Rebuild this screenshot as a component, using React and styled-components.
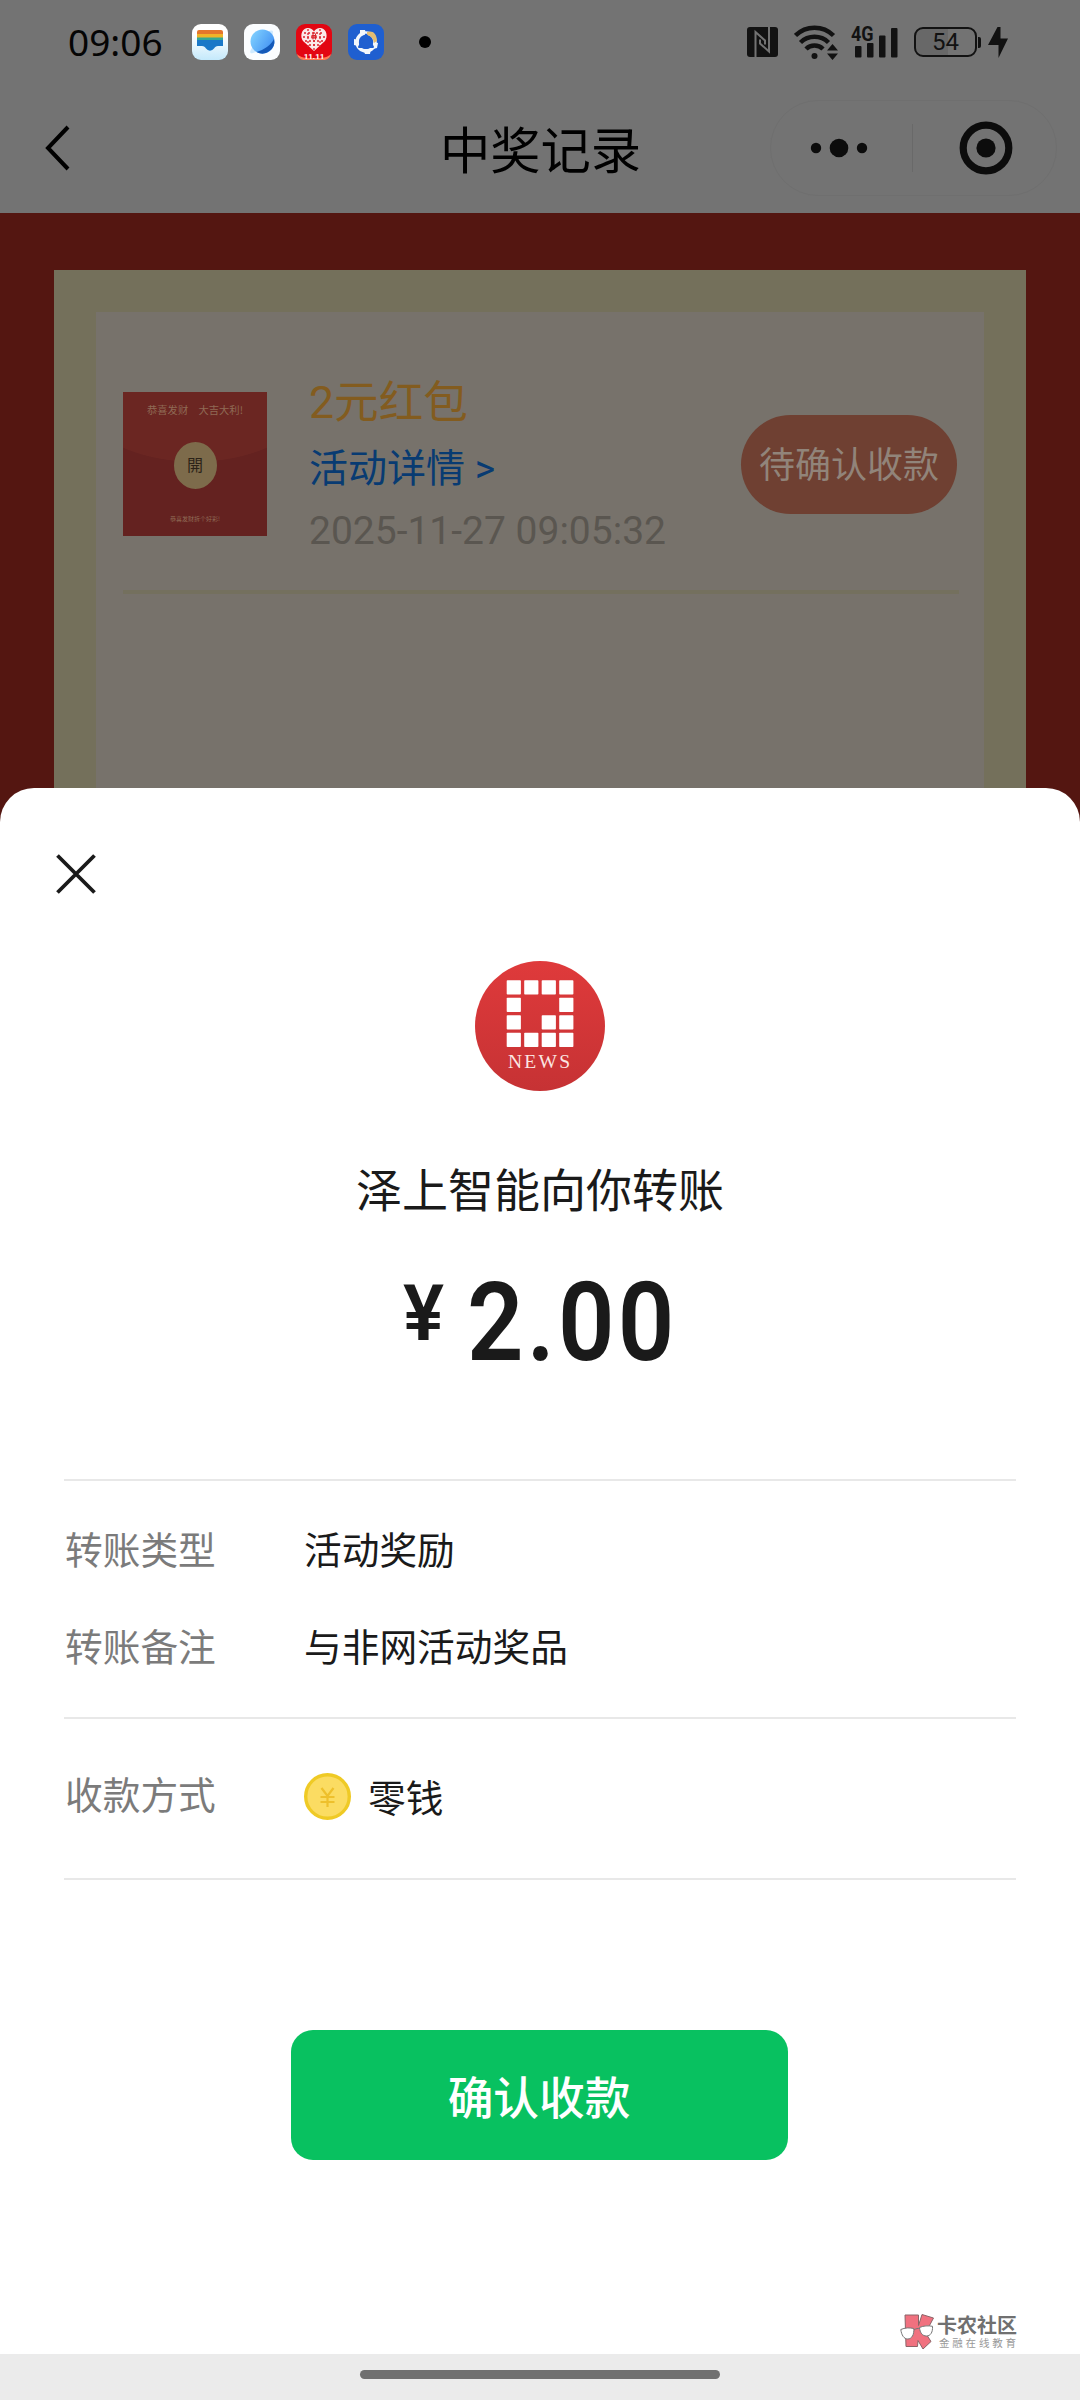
import React from "react"
import styled, { createGlobalStyle } from "styled-components"

const GlobalStyle = createGlobalStyle`
  * {
    box-sizing: border-box;
  }
  body {
    margin: 0;
    font-family: "Noto Sans CJK SC", sans-serif;
    -webkit-font-smoothing: antialiased;
  }
`

const Screen = styled.div`
  width: 1080px;
  height: 2400px;
  display: flex;
  flex-direction: column;
  overflow: hidden;
  background: #541611;
`

/* ---------- header ---------- */

const StatusBar = styled.div`
  height: 84px;
  flex: none;
  display: flex;
  align-items: center;
  padding: 0 72px 0 68px;
  background: #737373;
  color: #121212;
  svg {
    display: block;
    flex: none;
  }
`

const Clock = styled.div`
  width: 124px;
  font-family: "Noto Sans", sans-serif;
  font-size: 37px;
  line-height: 40px;
  color: #050505;
`

const AppIcons = styled.div`
  display: flex;
  gap: 16px;
`

const Dot = styled.span`
  width: 12px;
  height: 12px;
  margin-left: 35px;
  border-radius: 50%;
  background: #000;
`

const StatusIcons = styled.div`
  display: flex;
  align-items: center;
  margin-left: auto;
`

const Signal = styled.div`
  position: relative;
  width: 47px;
  height: 32px;
  margin-left: 12px;
`

const NetworkType = styled.span`
  position: absolute;
  left: 0;
  top: -4px;
  font-family: Roboto, sans-serif;
  font-size: 20px;
  font-weight: 700;
  line-height: 24px;
  transform: scaleX(0.9);
  transform-origin: left;
`

const Battery = styled.div`
  position: relative;
  width: 63px;
  height: 30px;
  margin-left: 16px;
  border: 2px solid #121212;
  border-radius: 9px;
  background: linear-gradient(90deg, #686868 54%, #737373 54%);
  font-family: Roboto, sans-serif;
  font-size: 24px;
  line-height: 27px;
  text-align: center;
  &::after {
    content: "";
    position: absolute;
    right: -6px;
    top: 8px;
    width: 3px;
    height: 11px;
    border-radius: 0 2px 2px 0;
    background: #121212;
  }
`

const NavBar = styled.div`
  height: 129px;
  flex: none;
  display: grid;
  grid-template-columns: 310px 1fr 310px;
  align-items: center;
  padding-bottom: 1px;
  background: #737373;
`

const BackIcon = styled.svg`
  margin-left: 42px;
`

const NavTitle = styled.h1`
  margin: 0;
  padding: 0 0 3px 1px;
  font-size: 50.3px;
  font-weight: 400;
  line-height: 60px;
  text-align: center;
  color: #000;
`

const Capsule = styled.div`
  width: 287px;
  height: 96px;
  display: flex;
  align-items: center;
  border: 1px solid #6f6f6f;
  border-radius: 48px;
`

const CapsuleHalf = styled.div`
  width: 141px;
  display: flex;
  justify-content: center;
  padding-right: 5px;
  & + & {
    width: 144px;
    height: 48px;
    padding: 0 0 0 2px;
    align-items: center;
    border-left: 1px solid #696969;
  }
`

/* ---------- record card ---------- */

const RecordCard = styled.div`
  height: 518px;
  flex: none;
  margin: 57px 54px 0;
  padding: 42px 42px 0;
  background: #74705b;
`

const RecordList = styled.div`
  height: 476px;
  padding: 0 25px 0 27px;
  background: #77726b;
`

const Record = styled.div`
  height: 282px;
  display: flex;
  align-items: center;
  padding-top: 26px;
  border-bottom: 4px solid #74705e;
`

const Packet = styled.div`
  width: 144px;
  height: 144px;
  display: flex;
  flex-direction: column;
  align-items: center;
  background: radial-gradient(ellipse 120px 70px at 50% 0, #6b2622 99%, #642220 100%);
  color: #8f6a55;
`

const PacketText = styled.div`
  height: ${(props) => (props.$small ? "14px" : "38px")};
  padding-top: ${(props) => (props.$small ? "0" : "8px")};
  font-size: ${(props) => (props.$small ? "6px" : "10.3px")};
  line-height: ${(props) => (props.$small ? "14px" : "20px")};
  white-space: pre;
`

const PacketSeal = styled.div`
  width: 43px;
  height: 47px;
  margin: 12px 0 23px;
  border-radius: 50%;
  background: #7d6b4b;
  color: #2c2318;
  font-size: 16px;
  line-height: 45px;
  text-align: center;
`

const RecordInfo = styled.div`
  flex: 1;
  margin-left: 42px;
  padding-top: 3px;
  white-space: nowrap;
`

const RecordTitle = styled.div`
  font-family: Roboto, "Noto Sans CJK SC", sans-serif;
  font-size: 44.6px;
  line-height: 65px;
  color: #835c1f;
`

const RecordLink = styled.div`
  font-family: Roboto, "Noto Sans CJK SC", sans-serif;
  font-size: 39px;
  line-height: 66px;
  color: #083b72;
`

const RecordTime = styled.div`
  font-family: Roboto, sans-serif;
  font-size: 39px;
  line-height: 58px;
  color: #5a5650;
`

const PendingButton = styled.button`
  width: 216px;
  height: 99px;
  margin-right: 2px;
  padding: 0 0 5px;
  border: none;
  border-radius: 50px;
  background: #6f4032;
  color: #91847a;
  font-family: "Noto Sans CJK SC", sans-serif;
  font-size: 36px;
  white-space: nowrap;
`

/* ---------- transfer sheet ---------- */

const Sheet = styled.div`
  position: relative;
  height: 1566px;
  flex: none;
  padding: 0 64px;
  display: flex;
  flex-direction: column;
  align-items: center;
  border-radius: 34px 34px 0 0;
  background: #fff;
  color: #1a1a1a;
`

const CloseIcon = styled.svg`
  align-self: flex-start;
  margin: 66px 0 67px -8px;
  flex: none;
`

const Payer = styled.div`
  margin-top: 66px;
  font-size: 46px;
  line-height: 60px;
`

const Amount = styled.div`
  display: flex;
  align-items: flex-start;
  height: 110px;
  margin-top: 51px;
  font-family: Roboto, sans-serif;
  font-weight: 600;
`

const Currency = styled.span`
  width: 64px;
  font-size: 77px;
  line-height: 92px;
`

const Figure = styled.span`
  width: 210px;
  font-size: 110px;
  line-height: 110px;
  letter-spacing: 3.5px;
  transform: scaleX(0.9);
  transform-origin: left;
`

const Details = styled.div`
  width: 952px;
  margin-top: 101px;
  border-top: 2px solid #e8e8e8;
`

const DetailGroup = styled.div`
  height: ${(props) => props.$height}px;
  display: flex;
  flex-direction: column;
  justify-content: center;
  padding-bottom: 5px;
  border-bottom: 2px solid #e8e8e8;
`

const DetailRow = styled.div`
  height: 97px;
  display: flex;
  align-items: center;
  font-size: 37.7px;
  line-height: 56px;
`

const DetailLabel = styled.div`
  width: 240px;
  padding-left: 1px;
  padding-bottom: ${(props) => (props.$raised ? "6px" : "0")};
  color: #7b7b7b;
`

const DetailValue = styled.div`
  display: flex;
  align-items: center;
  gap: 17px;
`

const ConfirmButton = styled.button`
  width: 497px;
  height: 130px;
  margin: 150px 2px 0 0;
  padding: 0;
  border: none;
  border-radius: 22px;
  background: #08c160;
  color: #fff;
  font-family: "Noto Sans CJK SC", sans-serif;
  font-size: 45.7px;
  font-weight: 500;
`

const Watermark = styled.div`
  position: absolute;
  left: 900px;
  bottom: 4px;
  display: flex;
  align-items: center;
  gap: 3px;
`

const WatermarkName = styled.div`
  font-size: 20px;
  font-weight: 700;
  line-height: 22px;
  color: #707070;
`

const WatermarkSlogan = styled.div`
  padding-left: 2px;
  font-size: 10.5px;
  line-height: 14px;
  letter-spacing: 2.8px;
  color: #999;
`

const HomeBar = styled.div`
  flex: 1;
  padding-top: 16px;
  background: #ebebeb;
`

const HomeHandle = styled.div`
  width: 360px;
  height: 9px;
  margin: 0 auto;
  border-radius: 5px;
  background: #707070;
`

const WalletIcon = () => (
  <svg width="36" height="36" viewBox="0 0 36 36">
    <defs>
      <linearGradient id="wallet" x1="0" y1="0" x2="0" y2="1">
        <stop offset="0.3" stopColor="#fff" />
        <stop offset="1" stopColor="#c4e9fb" />
      </linearGradient>
    </defs>
    <rect width="36" height="36" rx="9" fill="url(#wallet)" />
    <path d="M5 10V8a2 2 0 0 1 2-2h22a2 2 0 0 1 2 2v2z" fill="#e5762c" />
    <path d="M5 10h26v4H5z" fill="#f0b429" />
    <path d="M5 13.500h26v3H5z" fill="#35a894" />
    <path d="M5 16h26v6h-5c-2 0-3 1-4 2.500a4.800 4.800 0 0 1-8 0c-1-1.500-2-2.500-4-2.500H5z" fill="#1978c8" />
  </svg>
)

const BrowserIcon = () => (
  <svg width="36" height="36" viewBox="0 0 36 36">
    <defs>
      <linearGradient id="globe" x1="0" y1="0.2" x2="1" y2="0.8">
        <stop offset="0" stopColor="#7fd0ff" />
        <stop offset="1" stopColor="#3f8df2" />
      </linearGradient>
    </defs>
    <rect width="36" height="36" rx="9" fill="#fbfdff" />
    <path d="M8 24c-3 4-2 6 1 5 8-2 18-12 20-20 .5-3-2-3-5-1z" fill="#cfeaff" />
    <circle cx="18.500" cy="17.500" r="12" fill="url(#globe)" />
    <path d="M30 15A12 12 0 0 1 12.500 28C20 26 27 21 30 15z" fill="#1459b8" />
  </svg>
)

const HeartIcon = () => (
  <svg width="36" height="36" viewBox="0 0 36 36">
    <rect width="36" height="36" rx="9" fill="#e30612" />
    <path d="M1 30c4 4 8 4 17 4s13 0 17-4c-1 4-4 6-8 6H9c-4 0-7-2-8-6z" fill="#ff7a55" />
    <path d="M18 27L7 17c-3-4-2-12 4-13 3-.5 5.500 1 7 3.500C19.500 5 22 3.500 25 4c6 1 7 9 4 13z" fill="#fbe9e9" />
    <g fill="none" stroke="#d9252d" strokeWidth="1.300" strokeDasharray="2 2">
      <path d="M8 9h20M7 13h22M9 17h18M13 21h10M12 5v18M18 8v18M24 5v18" />
    </g>
    <path d="M15.500 11.500h5M15.500 14h5M17 9.500v6M19.500 9.500v6" stroke="#d9252d" strokeWidth="1" />
    <text x="18" y="34.500" textAnchor="middle" fontFamily="Roboto" fontSize="8" fontWeight="700" fill="#fff">11.11</text>
  </svg>
)

const GearIcon = () => (
  <svg width="36" height="36" viewBox="0 0 36 36">
    <rect width="36" height="36" rx="9" fill="#1f5fd0" />
    <circle cx="18" cy="18" r="9" fill="none" stroke="#f2f7fc" strokeWidth="3.500" />
    <g fill="#f2f7fc">
      <path d="M12 6h5l1 4-6 2z" />
      <path d="M6 15l5 1-1 6-4-1z" />
      <path d="M15 25h8l-1 5h-5z" />
      <path d="M26 18l4 1-1 5-4 1z" />
    </g>
    <path d="M19 8c5-2 10 1 10 9l-3 2c-1-5-3-7-7-8z" fill="#e4bd72" />
    <path d="M18 10.500l7 12.500H11z" fill="#1f5fd0" strokeLinejoin="round" stroke="#1f5fd0" strokeWidth="2" />
  </svg>
)

const NfcIcon = () => (
  <svg width="31" height="30" viewBox="0 0 31 30">
    <path d="M3 0h25a3 3 0 0 1 3 3v24a3 3 0 0 1-3 3H3a3 3 0 0 1-3-3V3a3 3 0 0 1 3-3z" fill="#121212" />
    <path d="M8.500 30V5l9.500 8.500v4M22 0v24.500l-9-8v-4" fill="none" stroke="#737373" strokeWidth="2" />
  </svg>
)

const WifiIcon = () => (
  <svg width="45" height="35" viewBox="0 0 45 35" style={{ marginLeft: 16 }}>
    <g fill="none" stroke="#121212" strokeWidth="4.500">
      <path d="M1.500 10.500a27 27 0 0 1 38 0" />
      <path d="M6.500 17.500a20 20 0 0 1 28 0" />
      <path d="M12 24a12 12 0 0 1 17 0" />
    </g>
    <circle cx="20.500" cy="31" r="3" fill="#121212" />
    <path d="M33 25.500l5.500-6.500 5.500 6.500zM33 28.500h11L38.500 35z" fill="#121212" />
  </svg>
)

const SignalIcon = () => (
  <Signal>
    <NetworkType>4G</NetworkType>
    <svg width="47" height="32" viewBox="0 0 47 32" fill="#121212">
      <rect x="4" y="20" width="6.500" height="11.500" rx="1" />
      <rect x="16" y="17" width="6.500" height="14.500" rx="1" />
      <rect x="28" y="9.500" width="6.500" height="22" rx="1" />
      <rect x="40" y="2" width="6.500" height="29.500" rx="1" />
    </svg>
  </Signal>
)

const BoltIcon = () => (
  <svg width="20" height="31" viewBox="0 0 20 31" style={{ marginLeft: 11 }}>
    <path d="M9.500 0L0 18h10.500v13L20 11.500h-7.500V0z" fill="#121212" />
  </svg>
)

const BLOCKS = [
  [0, 0], [1, 0], [2, 0], [3, 0],
  [0, 1], [3, 1],
  [0, 2], [2, 2], [3, 2],
  [0, 3], [1, 3], [2, 3], [3, 3],
]

const NewsLogo = () => (
  <svg width="130" height="130" viewBox="0 0 130 130" style={{ flex: "none" }}>
    <defs>
      <linearGradient id="news" x1="0" y1="0" x2="0" y2="1">
        <stop offset="0" stopColor="#df3a3b" />
        <stop offset="1" stopColor="#c63234" />
      </linearGradient>
    </defs>
    <circle cx="65" cy="65" r="65" fill="url(#news)" />
    {BLOCKS.map(([col, row]) => (
      <rect key={`${col}-${row}`} x={31.7 + col * 17.5} y={19.3 + row * 17.5} width="14.200" height="14.200" rx="0.800" fill="#fff" />
    ))}
    <text x="33" y="107" fontFamily="Liberation Serif" fontSize="19.500" textLength="62" fill="#fbe6e2">NEWS</text>
  </svg>
)

const CoinIcon = () => (
  <svg width="47" height="47" viewBox="0 0 47 47">
    <circle cx="23.500" cy="23.500" r="21.800" fill="#fbdc62" stroke="#efca25" strokeWidth="3.400" />
    <path d="M17.500 15l6 8 6-8M23.500 23v11M16.500 24h14M16.500 29h14" fill="none" stroke="#eec02c" strokeWidth="2.200" />
  </svg>
)

const GlassesLogo = () => (
  <svg width="34" height="36" viewBox="0 0 34 36">
    <path d="M5 1h13.500v10.500L22 .5l11.500 3.500-8 15 5.500 8.500-8 7.500-5-8.500-.5 6H6z" fill="#f0717f" stroke="#8b6468" strokeWidth="1" />
    <g fill="#fff" stroke="#777" strokeWidth="1">
      <path d="M.8 15.500c4-1.800 9-2 13-1 .5 6-2 10.500-6 10.500S1.500 21 .8 15.500z" />
      <path d="M19.500 13.500c4-1.800 9-2 13-1.200.4 6-2 9.700-6 9.700s-6.500-3-7-8.500z" />
      <path d="M14 16c2-1.500 4-1.800 5.500-1.500" fill="none" />
    </g>
  </svg>
)

const DETAILS = [
  { label: "转账类型", value: "活动奖励" },
  { label: "转账备注", value: "与非网活动奖品" },
]

export default function App() {
  return (
    <Screen>
      <GlobalStyle />
      <StatusBar>
        <Clock>09:06</Clock>
        <AppIcons>
          <WalletIcon />
          <BrowserIcon />
          <HeartIcon />
          <GearIcon />
        </AppIcons>
        <Dot />
        <StatusIcons>
          <NfcIcon />
          <WifiIcon />
          <SignalIcon />
          <Battery>54</Battery>
          <BoltIcon />
        </StatusIcons>
      </StatusBar>

      <NavBar>
        <BackIcon width="30" height="50" viewBox="0 0 30 50">
          <path d="M26 4L6 25l20 21" fill="none" stroke="#000" strokeWidth="4" />
        </BackIcon>
        <NavTitle>中奖记录</NavTitle>
        <Capsule>
          <CapsuleHalf>
            <svg width="58" height="20" viewBox="0 0 58 20">
              <circle cx="6" cy="10" r="5.200" fill="#0c0c0c" />
              <circle cx="29" cy="10" r="9.300" fill="#0c0c0c" />
              <circle cx="52" cy="10" r="5.200" fill="#0c0c0c" />
            </svg>
          </CapsuleHalf>
          <CapsuleHalf>
            <svg width="54" height="54" viewBox="0 0 54 54">
              <circle cx="27" cy="27" r="22.800" fill="none" stroke="#0c0c0c" strokeWidth="7.200" />
              <circle cx="27" cy="27" r="9.600" fill="#0c0c0c" />
            </svg>
          </CapsuleHalf>
        </Capsule>
      </NavBar>

      <RecordCard>
        <RecordList>
          <Record>
            <Packet>
              <PacketText>恭喜发财　大吉大利!</PacketText>
              <PacketSeal>開</PacketSeal>
              <PacketText $small>恭喜发财拆个好彩!</PacketText>
            </Packet>
            <RecordInfo>
              <RecordTitle>2元红包</RecordTitle>
              <RecordLink>活动详情 &gt;</RecordLink>
              <RecordTime>2025-11-27 09:05:32</RecordTime>
            </RecordInfo>
            <PendingButton>待确认收款</PendingButton>
          </Record>
        </RecordList>
      </RecordCard>

      <Sheet>
        <CloseIcon width="40" height="40" viewBox="0 0 40 40">
          <path d="M1.500 1.500l37 37M38.500 1.500l-37 37" stroke="#1a1a1a" strokeWidth="3.800" />
        </CloseIcon>
        <NewsLogo />
        <Payer>泽上智能向你转账</Payer>
        <Amount>
          <Currency>¥</Currency>
          <Figure>2.00</Figure>
        </Amount>
        <Details>
          <DetailGroup $height={238}>
            {DETAILS.map((item) => (
              <DetailRow key={item.label}>
                <DetailLabel>{item.label}</DetailLabel>
                <DetailValue>{item.value}</DetailValue>
              </DetailRow>
            ))}
          </DetailGroup>
          <DetailGroup $height={161}>
            <DetailRow>
              <DetailLabel $raised>收款方式</DetailLabel>
              <DetailValue>
                <CoinIcon />
                零钱
              </DetailValue>
            </DetailRow>
          </DetailGroup>
        </Details>
        <ConfirmButton>确认收款</ConfirmButton>
        <Watermark>
          <GlassesLogo />
          <div>
            <WatermarkName>卡农社区</WatermarkName>
            <WatermarkSlogan>金融在线教育</WatermarkSlogan>
          </div>
        </Watermark>
      </Sheet>

      <HomeBar>
        <HomeHandle />
      </HomeBar>
    </Screen>
  )
}
